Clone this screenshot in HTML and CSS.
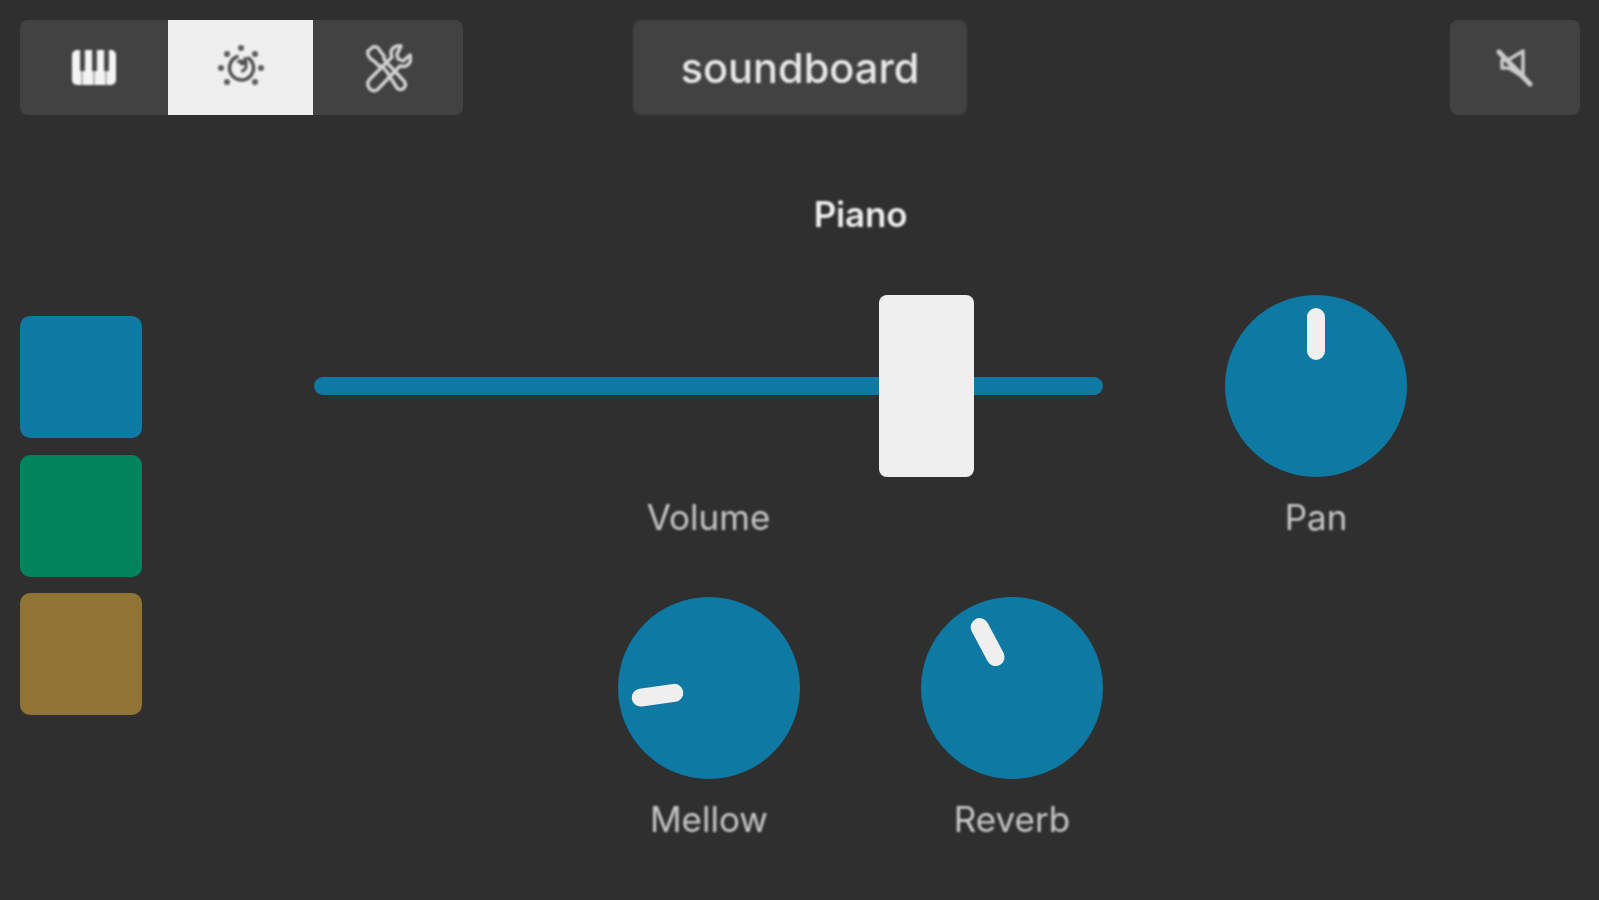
FILE: index.html
```html
<!DOCTYPE html>
<html lang="en">
<head>
<meta charset="utf-8">
<meta name="viewport" content="width=device-width, initial-scale=1.0">
<title>soundboard</title>
<link rel="stylesheet" href="styles.css">
</head>

<body>
<div id="container">
	<div class="topbar">
		<div class="tabs">
			<button class="tab">
				<svg class="icon" width="44" height="36" viewBox="0 0 44 36">
					<rect x="0" y="0" width="44" height="35" rx="5" fill="#f4f4f4"/>
					<rect x="8" y="0" width="5" height="21" fill="#4a4a4a"/>
					<rect x="20" y="0" width="5" height="21" fill="#4a4a4a"/>
					<rect x="32" y="0" width="5" height="21" fill="#4a4a4a"/>
					<path d="M10 21v14M22 21v14M34 21v14" stroke="#9a9a9a" stroke-width="1.5"/>
				</svg>
			</button>
			<button class="tab tab_active">
				<svg class="icon" width="48" height="48" viewBox="0 0 48 48" fill="none" stroke="#4f4f4f" stroke-width="3.5">
					<path d="M30.5 13.5a12 12 0 1 1-9-1.2"/>
					<path d="M24 27a5 5 0 1 0-3.5-8.5M28 13l1 6-6 1" stroke-width="3"/>
					<g fill="#5c5c5c" stroke="none">
						<circle cx="24" cy="4" r="3"/>
						<circle cx="38" cy="10" r="3"/>
						<circle cx="44" cy="24" r="3"/>
						<circle cx="38" cy="38" r="3"/>
						<circle cx="10" cy="38" r="3"/>
						<circle cx="4" cy="24" r="3"/>
						<circle cx="10" cy="10" r="3"/>
					</g>
				</svg>
			</button>
			<button class="tab">
				<svg class="icon" width="48" height="50" viewBox="0 0 48 50" fill="none" stroke="#d2d2d2" stroke-width="3.5" stroke-linejoin="round" stroke-linecap="round">
					<path d="M4 8l5-4c3-1 6 1 7 4l4 5 0 3 3 4 3 3 14 15c2 3 2 5 0 7s-5 2-7 0L23 29l-5-6-3 0-5-5C6 16 3 12 4 8z"/>
					<path d="M37 3c-5-1-10 2-10 7 0 2 0 3 1 4L6 36c-3 3-3 7 0 10s7 2 9-1l21-22c4 1 8 0 10-4 1-3 1-5 0-7l-7 6-5-2-1-5z"/>
				</svg>
			</button>
		</div>
		<div class="title">soundboard</div>
		<button class="mute">
			<svg class="icon" width="38" height="40" viewBox="0 0 38 40" fill="none" stroke="#cacaca" stroke-linejoin="round" stroke-linecap="round">
				<path d="M27 3v26L13 20H6V12h6z" stroke-width="3.5"/>
				<path d="M3 4l31 32" stroke-width="5"/>
			</svg>
		</button>
	</div>

	<div class="main">
		<div class="swatches">
			<div class="swatch swatch_blue"></div>
			<div class="swatch swatch_green"></div>
			<div class="swatch swatch_gold"></div>
		</div>

		<div class="panel">
			<div class="panel_title">Piano</div>
			<div class="controls">
				<div class="control">
					<div class="slider">
						<div class="slider_track"></div>
						<div class="slider_thumb"></div>
					</div>
					<span class="control_label">Volume</span>
				</div>
				<div class="control">
					<div class="knob">
						<div class="knob_pointer"></div>
					</div>
					<span class="control_label">Pan</span>
				</div>
				<div class="knob_pair">
					<div class="control">
						<div class="knob">
							<div class="knob_pointer" style="transform: rotate(-98deg)"></div>
						</div>
						<span class="control_label">Mellow</span>
					</div>
					<div class="control">
						<div class="knob">
							<div class="knob_pointer" style="transform: rotate(-28deg)"></div>
						</div>
						<span class="control_label">Reverb</span>
					</div>
				</div>
			</div>
		</div>
	</div>
</div>
</body>
</html>
```

FILE: styles.css
```css
:root {
	--Bg: #2f2f2f;
	--Btn: #424242;
	--Light: #efefef;
	--Blue: #0e7aa3;
	--KnobDia: 182px;
}

html, body {
	margin: 0;
	height: 100%;
	background-color: var(--Bg);
}

button {
	border: 0;
	padding: 0;
	display: flex;
	align-items: center;
	justify-content: center;
}

#container {
	box-sizing: border-box;
	height: 900px;
	padding: 20px 19px 0 20px;
	font-family: Inter, "Liberation Sans", sans-serif;
	filter: blur(0.6px);
}

/* the reference is an upscaled shot, glyphs are soft */
.icon,
.title,
.panel_title,
.control_label {
	filter: blur(0.9px);
}

.topbar {
	display: flex;
	height: 95px;
}

.tabs {
	display: grid;
	grid-template-columns: 148px 145px 150px;
	background-color: var(--Btn);
	border-radius: 8px;
	overflow: hidden;
}

.tab {
	background-color: transparent;
}

.tab_active {
	background-color: var(--Light);
}

.title {
	display: flex;
	align-items: center;
	justify-content: center;
	width: 334px;
	margin-left: 170px;
	background-color: var(--Btn);
	border-radius: 8px;
	font-size: 41.5px;
	font-weight: 500;
	color: #e8e8e8;
}

.mute {
	width: 130px;
	margin-left: auto;
	background-color: var(--Btn);
	border-radius: 8px;
}

.main {
	display: flex;
}

.swatches {
	display: flex;
	flex-direction: column;
	gap: 16.5px;
	margin-top: 201px;
}

.swatch {
	width: 122px;
	height: 122px;
	border-radius: 10px;
}

.swatch_blue {
	background-color: var(--Blue);
}

.swatch_green {
	background-color: #03835c;
}

.swatch_gold {
	background-color: #8f7435;
}

.panel {
	width: 1093px;
	margin-left: 172px;
}

.panel_title {
	margin-top: 78px;
	height: 42px;
	line-height: 42px;
	text-align: center;
	font-size: 35px;
	font-weight: 600;
	letter-spacing: -0.2px;
	color: var(--Light);
}

.controls {
	display: grid;
	grid-template-columns: 789px var(--KnobDia);
	justify-content: space-between;
	row-gap: 60px;
	margin-top: 60px;
}

.control {
	display: flex;
	flex-direction: column;
	align-items: center;
	width: 100%;
}

.control_label {
	margin-top: 20px;
	line-height: 40px;
	font-size: 35px;
	color: #c8c8c8;
}

.slider {
	position: relative;
	display: flex;
	align-items: center;
	width: 100%;
	height: var(--KnobDia);
}

.slider_track {
	width: 100%;
	height: 18px;
	border-radius: 9px;
	background-color: var(--Blue);
}

.slider_thumb {
	position: absolute;
	top: 0;
	left: 565px;
	width: 95px;
	height: var(--KnobDia);
	border-radius: 8px;
	background-color: var(--Light);
}

.knob {
	position: relative;
	width: var(--KnobDia);
	height: var(--KnobDia);
	border-radius: 50%;
	background-color: var(--Blue);
}

.knob_pointer {
	position: absolute;
	top: 13px;
	left: calc(50% - 9px);
	width: 18px;
	height: 52px;
	border-radius: 9px;
	background-color: var(--Light);
	transform-origin: 9px 78px;
}

.knob_pair {
	display: grid;
	grid-template-columns: var(--KnobDia) var(--KnobDia);
	justify-content: space-between;
	width: 485px;
	margin-left: 304px;
}
```
